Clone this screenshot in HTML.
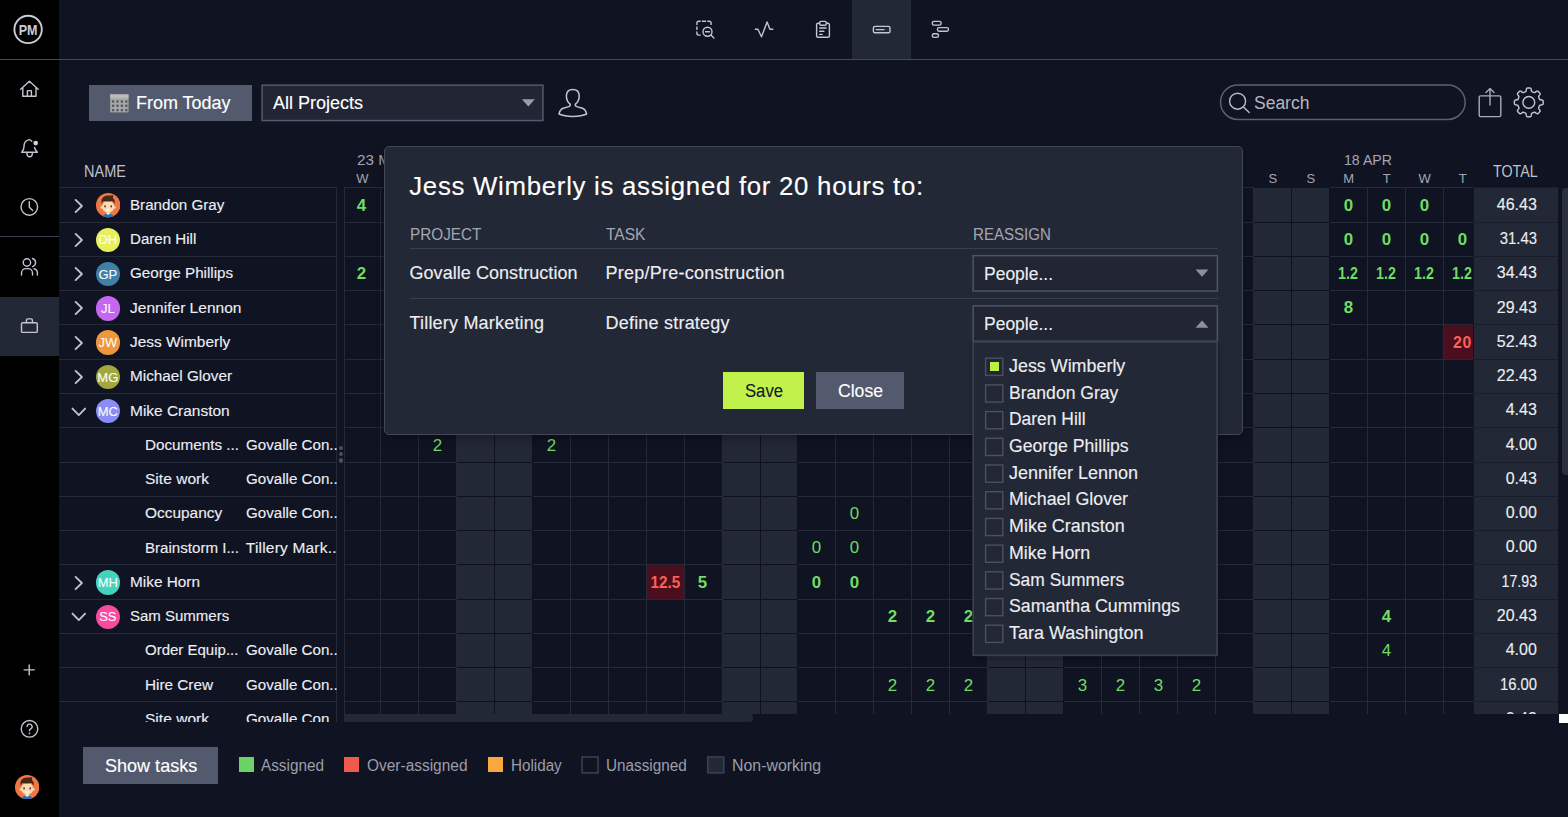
<!DOCTYPE html>
<html lang="en"><head><meta charset="utf-8"><title>Workload</title>
<style>
html,body{margin:0;padding:0}
body{width:1568px;height:817px;overflow:hidden;position:relative;background:#101322;font-family:"Liberation Sans",sans-serif;}
div,svg{position:absolute;box-sizing:border-box}
.t{white-space:nowrap;line-height:1;}
.k{-webkit-text-stroke:.13px currentColor;}
.ic{fill:none;stroke:#c3c6d2;stroke-width:1.4;stroke-linecap:round;stroke-linejoin:round}
.av{border-radius:50%;color:#fff;text-align:center;}
</style></head><body>

<div style="left:0;top:0;width:59px;height:817px;background:#000"></div>
<div style="left:0;top:296.5px;width:59px;height:59px;background:#232836"></div>
<div style="left:0;top:236px;width:59px;height:1.3px;background:#3a3f4e"></div>
<div style="left:852px;top:0;width:59px;height:59px;background:#232836"></div>
<div style="left:0;top:59px;width:1568px;height:1px;background:#444959"></div>
<svg style="left:0;top:0" width="1568" height="140" viewBox="0 0 1568 140">
<circle cx="28.1" cy="29.4" r="13.7" fill="none" stroke="#c9ccd8" stroke-width="1.9"/>
<text x="18.7" y="34.6" font-family="Liberation Sans, sans-serif" font-weight="bold" font-size="14.6" textLength="18.8" lengthAdjust="spacingAndGlyphs" fill="#c9ccd8">PM</text>
<path class="ic" d="M20.6 89.2 L29.4 81.2 L38.2 89.2 M22.8 87.6 V96.2 H36 V87.6 M27.4 96.2 V90.6 H31.4 V96.2"/>
<path class="ic" d="M696.9 24.4v-1.300a1.800 1.800 0 0 1 1.800-1.800h1.500 M702.400 21.300h3.200 M707.800 21.300h1.500a1.800 1.800 0 0 1 1.800 1.800v1.300 M696.900 27v2.400 M696.900 32v1.300a1.800 1.800 0 0 0 1.800 1.800h1.500"/>
<circle class="ic" cx="707.5" cy="31.8" r="4.5"/><path class="ic" d="M705.500 31.800h4 M710.900 35.100L713.900 38"/>
<path class="ic" d="M755.400 29.300H757.900L761.500 36.800L767.100 21.900L769.900 29.300H772.800"/>
<path class="ic" d="M819.400 23.300h-1.400a1.400 1.400 0 0 0-1.400 1.400v11.200a1.400 1.400 0 0 0 1.400 1.400h10a1.400 1.400 0 0 0 1.400-1.400v-11.200a1.400 1.400 0 0 0-1.400-1.400h-1.400"/>
<rect class="ic" x="819.700" y="21.400" width="6.600" height="3.900" rx="1.200"/><path class="ic" d="M819.700 28h6.400 M819.700 31.300h4.200 M819.700 34.400h2.400"/>
<rect class="ic" x="873.4" y="26.4" width="16.6" height="6.4" rx="1.6"/><path class="ic" d="M876.4 29.6h7.6"/>
<rect class="ic" x="932.300" y="21.400" width="8.800" height="3.700" rx="1.700"/><rect class="ic" x="937.400" y="27.600" width="11.100" height="3.700" rx="1.700"/><rect class="ic" x="932.300" y="33.700" width="6.200" height="3.700" rx="1.700"/>
</svg>
<svg style="left:0;top:120px" width="60" height="697" viewBox="0 120 60 697">
<path class="ic" d="M31.800 141.200C30.900 140.200 30 139.600 29.200 139.600C25.800 140.300 24 143 24 146.500C24 149 23.200 150.700 21.700 152.200H37.400C35.900 150.800 34.800 149.400 34.500 147.400 M26.900 152.500C26.900 155 28 156.800 29.600 156.800S32.400 155 32.400 152.500"/>
<circle cx="35.700" cy="143.100" r="2.350" fill="#cfd1e2"/>
<circle class="ic" cx="29.3" cy="206.9" r="8.3"/><path class="ic" d="M29.3 201.6v5.600l3.400 3.200"/>
<circle class="ic" cx="26.900" cy="262.500" r="3.700"/><path class="ic" d="M21.500 275v-2a4.400 4.400 0 0 1 4.400-4.400h2.200a4.400 4.400 0 0 1 4.400 4.400v2"/>
<path class="ic" d="M32.500 258.500a4.200 4.200 0 0 1 0 8.100 M34 268.700a4.300 4.300 0 0 1 3.400 4.300v2"/>
<rect class="ic" x="21.500" y="322.800" width="15.800" height="9.600" rx="1.200"/><path class="ic" d="M26.400 322.600v-2.400a1.300 1.300 0 0 1 1.300-1.300h3.400a1.300 1.300 0 0 1 1.300 1.300v2.400"/>
<path class="ic" d="M24.200 669.900h10 M29.200 664.900v10"/>
<circle class="ic" cx="29.500" cy="728.800" r="8.300"/><path class="ic" d="M27.100 726.600a2.500 2.500 0 1 1 3.600 2.300c-.8.400-1.200 1-1.200 1.900"/><circle cx="29.500" cy="733.300" r=".9" fill="#c3c6d2"/>
</svg>
<svg style="left:14.90px;top:775.10px" width="24.40" height="24.40" viewBox="-12 -12 24 24"><defs><clipPath id="c1058"><circle r="12"/></clipPath></defs><circle r="12" fill="#ee7745"/><g clip-path="url(#c1058)"><path d="M-6 13.500c0-3.600 2.400-5 6-5s6 1.400 6 5z" fill="#2b70b6"/><path d="M-1.700 6.500h3.400v2l-1.700 1.200-1.700-1.200z" fill="#fbe9d2"/><ellipse cx="0" cy="1.500" rx="6" ry="6" fill="#f9dcb4"/><circle cx="-6.200" cy="2.200" r="1.300" fill="#f6d2a6"/><circle cx="6.200" cy="2.200" r="1.300" fill="#f6d2a6"/><path d="M-6.300 -1.200c-1.100-4.800 1-8 6-8.300 2.200-.1 3.700.2 4.900-.6.600 1.100.4 2-.2 2.700 1.800 1.300 2.400 3.400 1.900 6.200-.7-1.500-1.300-2.300-2.300-2.900-3 .800-6.200.700-8.500 0-.9.700-1.400 1.600-1.800 2.900z" fill="#472818"/><ellipse cx="-3.100" cy="1.200" rx=".85" ry="1.050" fill="#5a2f1c"/><ellipse cx="3" cy="1.200" rx=".85" ry="1.050" fill="#5a2f1c"/><path d="M-2.500 4.200c1.400 1.800 3.600 1.800 5 0z" fill="#fff"/></g></svg>
<div style="left:89px;top:84.600px;width:163px;height:36.600px;background:#535a6e"></div>
<svg style="left:110px;top:94px" width="19" height="19" viewBox="110 94 19 19"><rect x="110.200" y="94.400" width="18.300" height="18" fill="#a9a9a4"/><rect x="110.200" y="94.400" width="18.300" height="3.600" fill="#bcbcb6"/><rect x="111.90" y="100.30" width="2.400" height="2.400" fill="#565c6c"/><rect x="116.30" y="100.30" width="2.400" height="2.400" fill="#565c6c"/><rect x="120.70" y="100.30" width="2.400" height="2.400" fill="#565c6c"/><rect x="125.10" y="100.30" width="2.400" height="2.400" fill="#565c6c"/><rect x="111.90" y="104.60" width="2.400" height="2.400" fill="#565c6c"/><rect x="116.30" y="104.60" width="2.400" height="2.400" fill="#565c6c"/><rect x="120.70" y="104.60" width="2.400" height="2.400" fill="#565c6c"/><rect x="125.10" y="104.60" width="2.400" height="2.400" fill="#565c6c"/><rect x="111.90" y="108.90" width="2.400" height="2.400" fill="#565c6c"/><rect x="116.30" y="108.90" width="2.400" height="2.400" fill="#565c6c"/><rect x="120.70" y="108.90" width="2.400" height="2.400" fill="#565c6c"/><rect x="125.10" y="108.90" width="2.400" height="2.400" fill="#565c6c"/></svg>
<div class="t k" style="left:136.00px;top:94.06px;font-size:18.00px;color:#fff;transform:scaleX(0.9978);transform-origin:left center;">From Today</div>
<svg style="left:260px;top:83px" width="285" height="40" viewBox="260 83 285 40"><rect x="262.05" y="85.15" width="280.90" height="35.40" rx="0.00" fill="#222634" stroke="#545a6b" stroke-width="1.50"/></svg>
<div class="t k" style="left:273.00px;top:94.06px;font-size:18.00px;color:#fff;">All Projects</div>
<svg style="left:520px;top:97px" width="18" height="12"><path d="M1.900 2.300h12.900l-6.450 7.100z" fill="#9a9eaa"/></svg>
<svg style="left:556px;top:86px" width="34" height="34" viewBox="556 86 34 34"><path class="ic" d="M572.800 89.400c-4 0-6.400 2.600-6.400 6.600 0 3.400 1.400 6.400 3.800 8.200.4 1.200-.2 2-1.400 2.400l-5.600 1.600c-2.400.7-3.600 2.700-4.200 5.800 3.400 1.600 8 2.400 13.800 2.400s10.400-.8 13.800-2.400c-.6-3.100-1.800-5.100-4.200-5.800l-5.600-1.600c-1.200-.4-1.800-1.200-1.400-2.400 2.400-1.800 3.800-4.800 3.800-8.200 0-4-2.400-6.600-6.400-6.600z" style="stroke-width:1.500"/></svg>
<svg style="left:1218px;top:83px" width="249" height="39" viewBox="1218 83 249 39"><rect x="1220.55" y="84.95" width="244.60" height="34.50" rx="17.25" fill="none" stroke="#5c6172" stroke-width="1.50"/></svg>
<svg style="left:1225px;top:88px" width="30" height="30" viewBox="1225 88 30 30"><circle class="ic" cx="1237.600" cy="101.200" r="8" style="stroke:#b9bbc4"/><path class="ic" d="M1243.400 107l5.800 5.600" style="stroke:#b9bbc4"/></svg>
<div class="t" style="left:1253.70px;top:93.86px;font-size:18.00px;color:#b4b7c0;transform:scaleX(0.9713);transform-origin:left center;">Search</div>
<svg style="left:1474px;top:84px" width="34" height="38" viewBox="1474 84 34 38"><path class="ic" d="M1480.600 95.900h18.800a1.400 1.400 0 0 1 1.400 1.400v17.900a1.400 1.400 0 0 1 -1.400 1.400h-18.800a1.400 1.400 0 0 1 -1.400-1.400v-17.900a1.400 1.400 0 0 1 1.400-1.400z M1490 105v-16 M1486 92.400l4-4 4 4" style="stroke:#a9acb8"/></svg>
<svg style="left:1510px;top:84px" width="38" height="38" viewBox="1510 84 38 38"><path class="ic" d="M1528.8 88.0L1529.2 88.0L1529.6 88.0L1529.9 88.0L1530.3 88.1L1530.7 88.2L1531.0 88.6L1531.2 89.3L1531.4 90.4L1531.5 91.1L1531.7 91.5L1532.0 91.7L1532.3 91.8L1532.5 91.9L1532.8 92.0L1533.1 92.1L1533.3 92.2L1533.6 92.3L1533.9 92.4L1534.1 92.6L1534.4 92.6L1534.9 92.5L1535.5 92.1L1536.3 91.4L1537.0 91.1L1537.5 91.1L1537.9 91.2L1538.2 91.4L1538.5 91.7L1538.7 91.9L1539.0 92.2L1539.3 92.5L1539.5 92.7L1539.8 93.0L1540.0 93.3L1540.1 93.7L1540.1 94.2L1539.8 94.9L1539.1 95.7L1538.7 96.3L1538.6 96.8L1538.6 97.1L1538.8 97.3L1538.9 97.6L1539.0 97.9L1539.1 98.1L1539.2 98.4L1539.3 98.7L1539.4 98.9L1539.5 99.2L1539.7 99.5L1540.1 99.7L1540.8 99.8L1541.9 100.0L1542.6 100.2L1543.0 100.5L1543.1 100.9L1543.2 101.3L1543.2 101.6L1543.2 102.0L1543.2 102.4L1543.2 102.8L1543.2 103.2L1543.2 103.5L1543.1 103.9L1543.0 104.3L1542.6 104.6L1541.9 104.8L1540.8 105.0L1540.1 105.1L1539.7 105.3L1539.5 105.6L1539.4 105.9L1539.3 106.1L1539.2 106.4L1539.1 106.7L1539.0 106.9L1538.9 107.2L1538.8 107.5L1538.6 107.7L1538.6 108.0L1538.7 108.5L1539.1 109.1L1539.8 109.9L1540.1 110.6L1540.1 111.1L1540.0 111.5L1539.8 111.8L1539.5 112.1L1539.3 112.3L1539.0 112.6L1538.7 112.9L1538.5 113.1L1538.2 113.4L1537.9 113.6L1537.5 113.7L1537.0 113.7L1536.3 113.4L1535.5 112.7L1534.9 112.3L1534.4 112.2L1534.1 112.2L1533.9 112.4L1533.6 112.5L1533.3 112.6L1533.1 112.7L1532.8 112.8L1532.5 112.9L1532.3 113.0L1532.0 113.1L1531.7 113.3L1531.5 113.7L1531.4 114.4L1531.2 115.5L1531.0 116.2L1530.7 116.6L1530.3 116.7L1529.9 116.8L1529.6 116.8L1529.2 116.8L1528.8 116.9L1528.4 116.8L1528.0 116.8L1527.7 116.8L1527.3 116.7L1526.9 116.6L1526.6 116.2L1526.4 115.5L1526.2 114.4L1526.1 113.7L1525.9 113.3L1525.6 113.1L1525.3 113.0L1525.1 112.9L1524.8 112.8L1524.5 112.7L1524.3 112.6L1524.0 112.5L1523.7 112.4L1523.5 112.2L1523.2 112.2L1522.7 112.3L1522.1 112.7L1521.3 113.4L1520.6 113.7L1520.1 113.7L1519.7 113.6L1519.4 113.4L1519.1 113.1L1518.9 112.9L1518.6 112.6L1518.3 112.3L1518.1 112.1L1517.8 111.8L1517.6 111.5L1517.5 111.1L1517.5 110.6L1517.8 109.9L1518.5 109.1L1518.9 108.5L1519.0 108.0L1519.0 107.7L1518.8 107.5L1518.7 107.2L1518.6 106.9L1518.5 106.7L1518.4 106.4L1518.3 106.1L1518.2 105.9L1518.1 105.6L1517.9 105.3L1517.5 105.1L1516.8 105.0L1515.7 104.8L1515.0 104.6L1514.6 104.3L1514.5 103.9L1514.4 103.5L1514.4 103.2L1514.4 102.8L1514.3 102.4L1514.4 102.0L1514.4 101.6L1514.4 101.3L1514.5 100.9L1514.6 100.5L1515.0 100.2L1515.7 100.0L1516.8 99.8L1517.5 99.7L1517.9 99.5L1518.1 99.2L1518.2 98.9L1518.3 98.7L1518.4 98.4L1518.5 98.1L1518.6 97.9L1518.7 97.6L1518.8 97.3L1519.0 97.1L1519.0 96.8L1518.9 96.3L1518.5 95.7L1517.8 94.9L1517.5 94.2L1517.5 93.7L1517.6 93.3L1517.8 93.0L1518.1 92.7L1518.3 92.5L1518.6 92.2L1518.9 91.9L1519.1 91.7L1519.4 91.4L1519.7 91.2L1520.1 91.1L1520.6 91.1L1521.3 91.4L1522.1 92.1L1522.7 92.5L1523.2 92.6L1523.5 92.6L1523.7 92.4L1524.0 92.3L1524.3 92.2L1524.5 92.1L1524.8 92.0L1525.1 91.9L1525.3 91.8L1525.6 91.7L1525.9 91.5L1526.1 91.1L1526.2 90.4L1526.4 89.3L1526.6 88.6L1526.9 88.2L1527.3 88.1L1527.7 88.0L1528.0 88.0L1528.4 88.0Z" style="stroke:#c3c6d2;stroke-width:1.400;stroke-linejoin:round"/><circle class="ic" cx="1528.800" cy="102.400" r="5.900" style="stroke-width:1.400"/></svg>
<div class="t" style="left:83.80px;top:163.29px;font-size:16.20px;color:#bfc2cc;transform:scaleX(0.8952);transform-origin:left center;">NAME</div>
<div style="left:59px;top:180px;width:278px;height:542px;overflow:hidden">
<div style="left:0;top:7.40px;width:277px;height:1px;background:#252a39"></div>
<div style="left:0;top:41.67px;width:277px;height:1px;background:#252a39"></div>
<div style="left:0;top:75.94px;width:277px;height:1px;background:#252a39"></div>
<div style="left:0;top:110.21px;width:277px;height:1px;background:#252a39"></div>
<div style="left:0;top:144.48px;width:277px;height:1px;background:#252a39"></div>
<div style="left:0;top:178.75px;width:277px;height:1px;background:#252a39"></div>
<div style="left:0;top:213.02px;width:277px;height:1px;background:#252a39"></div>
<div style="left:0;top:247.29px;width:277px;height:1px;background:#252a39"></div>
<div style="left:0;top:281.56px;width:277px;height:1px;background:#252a39"></div>
<div style="left:0;top:315.83px;width:277px;height:1px;background:#252a39"></div>
<div style="left:0;top:350.10px;width:277px;height:1px;background:#252a39"></div>
<div style="left:0;top:384.37px;width:277px;height:1px;background:#252a39"></div>
<div style="left:0;top:418.64px;width:277px;height:1px;background:#252a39"></div>
<div style="left:0;top:452.91px;width:277px;height:1px;background:#252a39"></div>
<div style="left:0;top:487.18px;width:277px;height:1px;background:#252a39"></div>
<div style="left:0;top:521.45px;width:277px;height:1px;background:#252a39"></div>
<div style="left:0;top:555.72px;width:277px;height:1px;background:#252a39"></div>
<div style="left:277px;top:7.400px;width:1px;height:540px;background:#252a39"></div>
<div class="t k" style="left:71.10px;top:16.88px;font-size:15.50px;color:#eceef2;transform:scaleX(0.9772);transform-origin:left center;">Brandon Gray</div>
<svg style="left:13.80px;top:16.60px" width="12" height="18" viewBox="0 0 12 18"><path class="ic" d="M2.600 2.900l6.300 6.100-6.300 6.100" style="stroke:#c0c3cf;stroke-width:1.850"/></svg>
<div class="t k" style="left:71.10px;top:51.15px;font-size:15.50px;color:#eceef2;transform:scaleX(0.9743);transform-origin:left center;">Daren Hill</div>
<svg style="left:13.80px;top:50.87px" width="12" height="18" viewBox="0 0 12 18"><path class="ic" d="M2.600 2.900l6.300 6.100-6.300 6.100" style="stroke:#c0c3cf;stroke-width:1.850"/></svg>
<div class="av" style="left:36.60px;top:47.67px;width:24.400px;height:24.400px;background:#e6f05a"></div>
<div class="t k" style="left:39.41px;top:53.47px;font-size:13.00px;color:#fff;opacity:.96">DH</div>
<div class="t k" style="left:71.10px;top:85.42px;font-size:15.50px;color:#eceef2;transform:scaleX(0.9818);transform-origin:left center;">George Phillips</div>
<svg style="left:13.80px;top:85.14px" width="12" height="18" viewBox="0 0 12 18"><path class="ic" d="M2.600 2.900l6.300 6.100-6.300 6.100" style="stroke:#c0c3cf;stroke-width:1.850"/></svg>
<div class="av" style="left:36.60px;top:81.94px;width:24.400px;height:24.400px;background:#3f80a8"></div>
<div class="t k" style="left:39.41px;top:87.74px;font-size:13.00px;color:#fff;opacity:.96">GP</div>
<div class="t k" style="left:71.10px;top:119.69px;font-size:15.50px;color:#eceef2;letter-spacing:0.009px;">Jennifer Lennon</div>
<svg style="left:13.80px;top:119.41px" width="12" height="18" viewBox="0 0 12 18"><path class="ic" d="M2.600 2.900l6.300 6.100-6.300 6.100" style="stroke:#c0c3cf;stroke-width:1.850"/></svg>
<div class="av" style="left:36.60px;top:116.21px;width:24.400px;height:24.400px;background:#c566f0"></div>
<div class="t k" style="left:41.93px;top:122.01px;font-size:13.00px;color:#fff;opacity:.96">JL</div>
<div class="t k" style="left:71.10px;top:153.96px;font-size:15.50px;color:#eceef2;transform:scaleX(0.9954);transform-origin:left center;">Jess Wimberly</div>
<svg style="left:13.80px;top:153.68px" width="12" height="18" viewBox="0 0 12 18"><path class="ic" d="M2.600 2.900l6.300 6.100-6.300 6.100" style="stroke:#c0c3cf;stroke-width:1.850"/></svg>
<div class="av" style="left:36.60px;top:150.48px;width:24.400px;height:24.400px;background:#f0963c"></div>
<div class="t k" style="left:39.42px;top:156.28px;font-size:13.00px;color:#fff;opacity:.96">JW</div>
<div class="t k" style="left:71.10px;top:188.23px;font-size:15.50px;color:#eceef2;transform:scaleX(0.9867);transform-origin:left center;">Michael Glover</div>
<svg style="left:13.80px;top:187.95px" width="12" height="18" viewBox="0 0 12 18"><path class="ic" d="M2.600 2.900l6.300 6.100-6.300 6.100" style="stroke:#c0c3cf;stroke-width:1.850"/></svg>
<div class="av" style="left:36.60px;top:184.75px;width:24.400px;height:24.400px;background:#a2a83e"></div>
<div class="t k" style="left:38.33px;top:190.55px;font-size:13.00px;color:#fff;opacity:.96">MG</div>
<div class="t k" style="left:71.10px;top:222.50px;font-size:15.50px;color:#eceef2;transform:scaleX(0.9977);transform-origin:left center;">Mike Cranston</div>
<svg style="left:10.70px;top:225.62px" width="18" height="12" viewBox="0 0 18 12"><path class="ic" d="M2.500 2.600l6.300 6.500 6.300-6.500" style="stroke:#c0c3cf;stroke-width:1.850"/></svg>
<div class="av" style="left:36.60px;top:219.02px;width:24.400px;height:24.400px;background:#8b8df6"></div>
<div class="t k" style="left:38.69px;top:224.82px;font-size:13.00px;color:#fff;opacity:.96">MC</div>
<div class="t k" style="left:86.00px;top:256.77px;font-size:15.50px;color:#eceef2;transform:scaleX(0.9831);transform-origin:left center;">Documents ...</div>
<div class="t k" style="left:186.80px;top:256.77px;font-size:15.50px;color:#eceef2;transform:scaleX(0.9774);transform-origin:left center;">Govalle Con...</div>
<div class="t k" style="left:86.00px;top:291.04px;font-size:15.50px;color:#eceef2;letter-spacing:0.032px;">Site work</div>
<div class="t k" style="left:186.80px;top:291.04px;font-size:15.50px;color:#eceef2;transform:scaleX(0.9774);transform-origin:left center;">Govalle Con...</div>
<div class="t k" style="left:86.00px;top:325.31px;font-size:15.50px;color:#eceef2;transform:scaleX(0.9956);transform-origin:left center;">Occupancy</div>
<div class="t k" style="left:186.80px;top:325.31px;font-size:15.50px;color:#eceef2;transform:scaleX(0.9774);transform-origin:left center;">Govalle Con...</div>
<div class="t k" style="left:86.00px;top:359.58px;font-size:15.50px;color:#eceef2;transform:scaleX(0.9744);transform-origin:left center;">Brainstorm I...</div>
<div class="t k" style="left:186.80px;top:359.58px;font-size:15.50px;color:#eceef2;letter-spacing:0.198px;">Tillery Mark...</div>
<div class="t k" style="left:71.10px;top:393.85px;font-size:15.50px;color:#eceef2;transform:scaleX(0.9911);transform-origin:left center;">Mike Horn</div>
<svg style="left:13.80px;top:393.57px" width="12" height="18" viewBox="0 0 12 18"><path class="ic" d="M2.600 2.900l6.300 6.100-6.300 6.100" style="stroke:#c0c3cf;stroke-width:1.850"/></svg>
<div class="av" style="left:36.60px;top:390.37px;width:24.400px;height:24.400px;background:#46d3bd"></div>
<div class="t k" style="left:38.69px;top:396.17px;font-size:13.00px;color:#fff;opacity:.96">MH</div>
<div class="t k" style="left:71.10px;top:428.12px;font-size:15.50px;color:#eceef2;transform:scaleX(0.9679);transform-origin:left center;">Sam Summers</div>
<svg style="left:10.70px;top:431.24px" width="18" height="12" viewBox="0 0 18 12"><path class="ic" d="M2.500 2.600l6.300 6.500 6.300-6.500" style="stroke:#c0c3cf;stroke-width:1.850"/></svg>
<div class="av" style="left:36.60px;top:424.64px;width:24.400px;height:24.400px;background:#f84b9f"></div>
<div class="t k" style="left:40.13px;top:430.44px;font-size:13.00px;color:#fff;opacity:.96">SS</div>
<div class="t k" style="left:86.00px;top:462.39px;font-size:15.50px;color:#eceef2;transform:scaleX(0.9680);transform-origin:left center;">Order Equip...</div>
<div class="t k" style="left:186.80px;top:462.39px;font-size:15.50px;color:#eceef2;transform:scaleX(0.9774);transform-origin:left center;">Govalle Con...</div>
<div class="t k" style="left:86.00px;top:496.66px;font-size:15.50px;color:#eceef2;transform:scaleX(0.9870);transform-origin:left center;">Hire Crew</div>
<div class="t k" style="left:186.80px;top:496.66px;font-size:15.50px;color:#eceef2;transform:scaleX(0.9774);transform-origin:left center;">Govalle Con...</div>
<div class="t k" style="left:86.00px;top:530.93px;font-size:15.50px;color:#eceef2;letter-spacing:0.032px;">Site work</div>
<div class="t k" style="left:186.80px;top:530.93px;font-size:15.50px;color:#eceef2;transform:scaleX(0.9774);transform-origin:left center;">Govalle Con...</div>
</div>
<svg style="left:95.60px;top:193.40px" width="24.40" height="24.40" viewBox="-12 -12 24 24"><defs><clipPath id="c1283"><circle r="12"/></clipPath></defs><circle r="12" fill="#ee7745"/><g clip-path="url(#c1283)"><path d="M-6 13.500c0-3.600 2.400-5 6-5s6 1.400 6 5z" fill="#2b70b6"/><path d="M-1.700 6.500h3.400v2l-1.700 1.200-1.700-1.200z" fill="#fbe9d2"/><ellipse cx="0" cy="1.500" rx="6" ry="6" fill="#f9dcb4"/><circle cx="-6.200" cy="2.200" r="1.300" fill="#f6d2a6"/><circle cx="6.200" cy="2.200" r="1.300" fill="#f6d2a6"/><path d="M-6.300 -1.200c-1.100-4.800 1-8 6-8.300 2.200-.1 3.700.2 4.900-.6.600 1.100.4 2-.2 2.700 1.800 1.300 2.400 3.400 1.900 6.200-.7-1.500-1.300-2.300-2.300-2.900-3 .800-6.200.700-8.500 0-.9.700-1.400 1.600-1.800 2.900z" fill="#472818"/><ellipse cx="-3.100" cy="1.200" rx=".85" ry="1.050" fill="#5a2f1c"/><ellipse cx="3" cy="1.200" rx=".85" ry="1.050" fill="#5a2f1c"/><path d="M-2.500 4.200c1.400 1.800 3.600 1.800 5 0z" fill="#fff"/></g></svg>
<div style="left:338.600px;top:446.10px;width:4.200px;height:4.200px;border-radius:50%;background:#4a4f5e"></div>
<div style="left:338.600px;top:452.30px;width:4.200px;height:4.200px;border-radius:50%;background:#4a4f5e"></div>
<div style="left:338.600px;top:458.40px;width:4.200px;height:4.200px;border-radius:50%;background:#4a4f5e"></div>
<div style="left:344.00px;top:187px;width:1129.00px;height:526.80px;overflow:hidden;background:#101322">
<div style="left:112px;top:0;width:38px;height:600px;background:#232836"></div>
<div style="left:150px;top:0;width:38px;height:600px;background:#232836"></div>
<div style="left:378px;top:0;width:38px;height:600px;background:#232836"></div>
<div style="left:416px;top:0;width:37px;height:600px;background:#232836"></div>
<div style="left:643px;top:0;width:38px;height:600px;background:#232836"></div>
<div style="left:681px;top:0;width:38px;height:600px;background:#232836"></div>
<div style="left:909px;top:0;width:38px;height:600px;background:#232836"></div>
<div style="left:947px;top:0;width:38px;height:600px;background:#232836"></div>
<div style="left:1100px;top:138px;width:37px;height:34px;background:#4b0e1f"></div>
<div style="left:303px;top:378px;width:37px;height:34px;background:#4b0e1f"></div>
<div style="left:0;top:0px;width:1200px;height:1px;background:#252a39"></div>
<div style="left:0;top:35px;width:1200px;height:1px;background:#252a39"></div>
<div style="left:0;top:69px;width:1200px;height:1px;background:#252a39"></div>
<div style="left:0;top:103px;width:1200px;height:1px;background:#252a39"></div>
<div style="left:0;top:137px;width:1200px;height:1px;background:#252a39"></div>
<div style="left:0;top:172px;width:1200px;height:1px;background:#252a39"></div>
<div style="left:0;top:206px;width:1200px;height:1px;background:#252a39"></div>
<div style="left:0;top:240px;width:1200px;height:1px;background:#252a39"></div>
<div style="left:0;top:275px;width:1200px;height:1px;background:#252a39"></div>
<div style="left:0;top:309px;width:1200px;height:1px;background:#252a39"></div>
<div style="left:0;top:343px;width:1200px;height:1px;background:#252a39"></div>
<div style="left:0;top:377px;width:1200px;height:1px;background:#252a39"></div>
<div style="left:0;top:412px;width:1200px;height:1px;background:#252a39"></div>
<div style="left:0;top:446px;width:1200px;height:1px;background:#252a39"></div>
<div style="left:0;top:480px;width:1200px;height:1px;background:#252a39"></div>
<div style="left:0;top:514px;width:1200px;height:1px;background:#252a39"></div>
<div style="left:0;top:549px;width:1200px;height:1px;background:#252a39"></div>
<div style="left:0px;top:0;width:1px;height:600px;background:#252a39"></div>
<div style="left:36px;top:0;width:1px;height:600px;background:#252a39"></div>
<div style="left:74px;top:0;width:1px;height:600px;background:#252a39"></div>
<div style="left:112px;top:0;width:1px;height:600px;background:#252a39"></div>
<div style="left:150px;top:0;width:1px;height:600px;background:#0f121d"></div>
<div style="left:188px;top:0;width:1px;height:600px;background:#0f121d"></div>
<div style="left:226px;top:0;width:1px;height:600px;background:#252a39"></div>
<div style="left:264px;top:0;width:1px;height:600px;background:#252a39"></div>
<div style="left:302px;top:0;width:1px;height:600px;background:#252a39"></div>
<div style="left:340px;top:0;width:1px;height:600px;background:#252a39"></div>
<div style="left:378px;top:0;width:1px;height:600px;background:#252a39"></div>
<div style="left:416px;top:0;width:1px;height:600px;background:#0f121d"></div>
<div style="left:453px;top:0;width:1px;height:600px;background:#0f121d"></div>
<div style="left:491px;top:0;width:1px;height:600px;background:#252a39"></div>
<div style="left:529px;top:0;width:1px;height:600px;background:#252a39"></div>
<div style="left:567px;top:0;width:1px;height:600px;background:#252a39"></div>
<div style="left:605px;top:0;width:1px;height:600px;background:#252a39"></div>
<div style="left:643px;top:0;width:1px;height:600px;background:#252a39"></div>
<div style="left:681px;top:0;width:1px;height:600px;background:#0f121d"></div>
<div style="left:719px;top:0;width:1px;height:600px;background:#0f121d"></div>
<div style="left:757px;top:0;width:1px;height:600px;background:#252a39"></div>
<div style="left:795px;top:0;width:1px;height:600px;background:#252a39"></div>
<div style="left:833px;top:0;width:1px;height:600px;background:#252a39"></div>
<div style="left:871px;top:0;width:1px;height:600px;background:#252a39"></div>
<div style="left:909px;top:0;width:1px;height:600px;background:#252a39"></div>
<div style="left:947px;top:0;width:1px;height:600px;background:#0f121d"></div>
<div style="left:985px;top:0;width:1px;height:600px;background:#0f121d"></div>
<div style="left:1023px;top:0;width:1px;height:600px;background:#252a39"></div>
<div style="left:1061px;top:0;width:1px;height:600px;background:#252a39"></div>
<div style="left:1099px;top:0;width:1px;height:600px;background:#252a39"></div>
<div style="left:1137px;top:0;width:1px;height:600px;background:#252a39"></div>
<div style="left:113px;top:0px;width:76px;height:1px;background:#0f121d"></div>
<div style="left:113px;top:35px;width:76px;height:1px;background:#0f121d"></div>
<div style="left:113px;top:69px;width:76px;height:1px;background:#0f121d"></div>
<div style="left:113px;top:103px;width:76px;height:1px;background:#0f121d"></div>
<div style="left:113px;top:137px;width:76px;height:1px;background:#0f121d"></div>
<div style="left:113px;top:172px;width:76px;height:1px;background:#0f121d"></div>
<div style="left:113px;top:206px;width:76px;height:1px;background:#0f121d"></div>
<div style="left:113px;top:240px;width:76px;height:1px;background:#0f121d"></div>
<div style="left:113px;top:275px;width:76px;height:1px;background:#0f121d"></div>
<div style="left:113px;top:309px;width:76px;height:1px;background:#0f121d"></div>
<div style="left:113px;top:343px;width:76px;height:1px;background:#0f121d"></div>
<div style="left:113px;top:377px;width:76px;height:1px;background:#0f121d"></div>
<div style="left:113px;top:412px;width:76px;height:1px;background:#0f121d"></div>
<div style="left:113px;top:446px;width:76px;height:1px;background:#0f121d"></div>
<div style="left:113px;top:480px;width:76px;height:1px;background:#0f121d"></div>
<div style="left:113px;top:514px;width:76px;height:1px;background:#0f121d"></div>
<div style="left:113px;top:549px;width:76px;height:1px;background:#0f121d"></div>
<div style="left:379px;top:0px;width:75px;height:1px;background:#0f121d"></div>
<div style="left:379px;top:35px;width:75px;height:1px;background:#0f121d"></div>
<div style="left:379px;top:69px;width:75px;height:1px;background:#0f121d"></div>
<div style="left:379px;top:103px;width:75px;height:1px;background:#0f121d"></div>
<div style="left:379px;top:137px;width:75px;height:1px;background:#0f121d"></div>
<div style="left:379px;top:172px;width:75px;height:1px;background:#0f121d"></div>
<div style="left:379px;top:206px;width:75px;height:1px;background:#0f121d"></div>
<div style="left:379px;top:240px;width:75px;height:1px;background:#0f121d"></div>
<div style="left:379px;top:275px;width:75px;height:1px;background:#0f121d"></div>
<div style="left:379px;top:309px;width:75px;height:1px;background:#0f121d"></div>
<div style="left:379px;top:343px;width:75px;height:1px;background:#0f121d"></div>
<div style="left:379px;top:377px;width:75px;height:1px;background:#0f121d"></div>
<div style="left:379px;top:412px;width:75px;height:1px;background:#0f121d"></div>
<div style="left:379px;top:446px;width:75px;height:1px;background:#0f121d"></div>
<div style="left:379px;top:480px;width:75px;height:1px;background:#0f121d"></div>
<div style="left:379px;top:514px;width:75px;height:1px;background:#0f121d"></div>
<div style="left:379px;top:549px;width:75px;height:1px;background:#0f121d"></div>
<div style="left:644px;top:0px;width:76px;height:1px;background:#0f121d"></div>
<div style="left:644px;top:35px;width:76px;height:1px;background:#0f121d"></div>
<div style="left:644px;top:69px;width:76px;height:1px;background:#0f121d"></div>
<div style="left:644px;top:103px;width:76px;height:1px;background:#0f121d"></div>
<div style="left:644px;top:137px;width:76px;height:1px;background:#0f121d"></div>
<div style="left:644px;top:172px;width:76px;height:1px;background:#0f121d"></div>
<div style="left:644px;top:206px;width:76px;height:1px;background:#0f121d"></div>
<div style="left:644px;top:240px;width:76px;height:1px;background:#0f121d"></div>
<div style="left:644px;top:275px;width:76px;height:1px;background:#0f121d"></div>
<div style="left:644px;top:309px;width:76px;height:1px;background:#0f121d"></div>
<div style="left:644px;top:343px;width:76px;height:1px;background:#0f121d"></div>
<div style="left:644px;top:377px;width:76px;height:1px;background:#0f121d"></div>
<div style="left:644px;top:412px;width:76px;height:1px;background:#0f121d"></div>
<div style="left:644px;top:446px;width:76px;height:1px;background:#0f121d"></div>
<div style="left:644px;top:480px;width:76px;height:1px;background:#0f121d"></div>
<div style="left:644px;top:514px;width:76px;height:1px;background:#0f121d"></div>
<div style="left:644px;top:549px;width:76px;height:1px;background:#0f121d"></div>
<div style="left:910px;top:0px;width:76px;height:1px;background:#0f121d"></div>
<div style="left:910px;top:35px;width:76px;height:1px;background:#0f121d"></div>
<div style="left:910px;top:69px;width:76px;height:1px;background:#0f121d"></div>
<div style="left:910px;top:103px;width:76px;height:1px;background:#0f121d"></div>
<div style="left:910px;top:137px;width:76px;height:1px;background:#0f121d"></div>
<div style="left:910px;top:172px;width:76px;height:1px;background:#0f121d"></div>
<div style="left:910px;top:206px;width:76px;height:1px;background:#0f121d"></div>
<div style="left:910px;top:240px;width:76px;height:1px;background:#0f121d"></div>
<div style="left:910px;top:275px;width:76px;height:1px;background:#0f121d"></div>
<div style="left:910px;top:309px;width:76px;height:1px;background:#0f121d"></div>
<div style="left:910px;top:343px;width:76px;height:1px;background:#0f121d"></div>
<div style="left:910px;top:377px;width:76px;height:1px;background:#0f121d"></div>
<div style="left:910px;top:412px;width:76px;height:1px;background:#0f121d"></div>
<div style="left:910px;top:446px;width:76px;height:1px;background:#0f121d"></div>
<div style="left:910px;top:480px;width:76px;height:1px;background:#0f121d"></div>
<div style="left:910px;top:514px;width:76px;height:1px;background:#0f121d"></div>
<div style="left:910px;top:549px;width:76px;height:1px;background:#0f121d"></div>
<div class="t" style="left:13.11px;top:10.53px;font-size:15.80px;color:#6fdc62;font-weight:bold;transform:scaleX(1.07);">4</div>
<div class="t" style="left:999.79px;top:10.53px;font-size:15.80px;color:#6fdc62;font-weight:bold;transform:scaleX(1.07);">0</div>
<div class="t" style="left:1037.75px;top:10.53px;font-size:15.80px;color:#6fdc62;font-weight:bold;transform:scaleX(1.07);">0</div>
<div class="t" style="left:1075.71px;top:10.53px;font-size:15.80px;color:#6fdc62;font-weight:bold;transform:scaleX(1.07);">0</div>
<div class="t" style="left:999.79px;top:44.80px;font-size:15.80px;color:#6fdc62;font-weight:bold;transform:scaleX(1.07);">0</div>
<div class="t" style="left:1037.75px;top:44.80px;font-size:15.80px;color:#6fdc62;font-weight:bold;transform:scaleX(1.07);">0</div>
<div class="t" style="left:1075.71px;top:44.80px;font-size:15.80px;color:#6fdc62;font-weight:bold;transform:scaleX(1.07);">0</div>
<div class="t" style="left:1113.67px;top:44.80px;font-size:15.80px;color:#6fdc62;font-weight:bold;transform:scaleX(1.07);">0</div>
<div class="t" style="left:13.11px;top:79.07px;font-size:15.80px;color:#6fdc62;font-weight:bold;transform:scaleX(1.07);">2</div>
<div class="t" style="left:993.20px;top:79.07px;font-size:15.80px;color:#6fdc62;transform:scaleX(0.9015);transform-origin:center center;font-weight:bold;">1.2</div>
<div class="t" style="left:1031.16px;top:79.07px;font-size:15.80px;color:#6fdc62;transform:scaleX(0.9015);transform-origin:center center;font-weight:bold;">1.2</div>
<div class="t" style="left:1069.12px;top:79.07px;font-size:15.80px;color:#6fdc62;transform:scaleX(0.9015);transform-origin:center center;font-weight:bold;">1.2</div>
<div class="t" style="left:1107.08px;top:79.07px;font-size:15.80px;color:#6fdc62;transform:scaleX(0.9015);transform-origin:center center;font-weight:bold;">1.2</div>
<div class="t" style="left:999.79px;top:113.34px;font-size:15.80px;color:#6fdc62;font-weight:bold;transform:scaleX(1.07);">8</div>
<div class="t" style="left:1108.91px;top:147.61px;font-size:15.80px;color:#fd6054;letter-spacing:0.725px;font-weight:bold;">20</div>
<div class="t" style="left:88.75px;top:250.62px;font-size:15.80px;color:#6fdc62;transform:scaleX(1.07);">2</div>
<div class="t" style="left:202.63px;top:250.62px;font-size:15.80px;color:#6fdc62;transform:scaleX(1.07);">2</div>
<div class="t" style="left:506.31px;top:319.16px;font-size:15.80px;color:#6fdc62;transform:scaleX(1.07);">0</div>
<div class="t" style="left:468.35px;top:353.43px;font-size:15.80px;color:#6fdc62;transform:scaleX(1.07);">0</div>
<div class="t" style="left:506.31px;top:353.43px;font-size:15.80px;color:#6fdc62;transform:scaleX(1.07);">0</div>
<div class="t" style="left:305.52px;top:387.50px;font-size:15.80px;color:#fd6054;transform:scaleX(0.9658);transform-origin:center center;font-weight:bold;">12.5</div>
<div class="t" style="left:354.47px;top:387.50px;font-size:15.80px;color:#6fdc62;font-weight:bold;transform:scaleX(1.07);">5</div>
<div class="t" style="left:468.35px;top:387.50px;font-size:15.80px;color:#6fdc62;font-weight:bold;transform:scaleX(1.07);">0</div>
<div class="t" style="left:506.31px;top:387.50px;font-size:15.80px;color:#6fdc62;font-weight:bold;transform:scaleX(1.07);">0</div>
<div class="t" style="left:544.27px;top:421.77px;font-size:15.80px;color:#6fdc62;font-weight:bold;transform:scaleX(1.07);">2</div>
<div class="t" style="left:582.23px;top:421.77px;font-size:15.80px;color:#6fdc62;font-weight:bold;transform:scaleX(1.07);">2</div>
<div class="t" style="left:620.19px;top:421.77px;font-size:15.80px;color:#6fdc62;font-weight:bold;transform:scaleX(1.07);">2</div>
<div class="t" style="left:1037.75px;top:421.77px;font-size:15.80px;color:#6fdc62;font-weight:bold;transform:scaleX(1.07);">4</div>
<div class="t" style="left:1037.75px;top:456.24px;font-size:15.80px;color:#6fdc62;transform:scaleX(1.07);">4</div>
<div class="t" style="left:544.27px;top:490.51px;font-size:15.80px;color:#6fdc62;transform:scaleX(1.07);">2</div>
<div class="t" style="left:582.23px;top:490.51px;font-size:15.80px;color:#6fdc62;transform:scaleX(1.07);">2</div>
<div class="t" style="left:620.19px;top:490.51px;font-size:15.80px;color:#6fdc62;transform:scaleX(1.07);">2</div>
<div class="t" style="left:734.07px;top:490.51px;font-size:15.80px;color:#6fdc62;transform:scaleX(1.07);">3</div>
<div class="t" style="left:772.03px;top:490.51px;font-size:15.80px;color:#6fdc62;transform:scaleX(1.07);">2</div>
<div class="t" style="left:809.99px;top:490.51px;font-size:15.80px;color:#6fdc62;transform:scaleX(1.07);">3</div>
<div class="t" style="left:847.95px;top:490.51px;font-size:15.80px;color:#6fdc62;transform:scaleX(1.07);">2</div>
</div>
<div style="left:344.00px;top:713.800px;width:408.50px;height:8.600px;background:#232836;border-radius:0 4.300px 4.300px 0"></div>
<div class="t" style="left:356.75px;top:152.48px;font-size:15.50px;color:#a3a7b3;transform:scaleX(0.9823);transform-origin:left center;">23 MAR</div>
<div class="t" style="left:1343.50px;top:152.28px;font-size:15.50px;color:#a3a7b3;transform:scaleX(0.9132);transform-origin:left center;">18 APR</div>
<div class="t" style="left:356.37px;top:172.10px;font-size:13.00px;color:#a3a7b3;">W</div>
<div class="t" style="left:395.81px;top:172.10px;font-size:13.00px;color:#a3a7b3;">T</div>
<div class="t" style="left:433.77px;top:172.10px;font-size:13.00px;color:#a3a7b3;">F</div>
<div class="t" style="left:471.36px;top:172.10px;font-size:13.00px;color:#a3a7b3;">S</div>
<div class="t" style="left:509.32px;top:172.10px;font-size:13.00px;color:#a3a7b3;">S</div>
<div class="t" style="left:546.21px;top:172.10px;font-size:13.00px;color:#a3a7b3;">M</div>
<div class="t" style="left:585.61px;top:172.10px;font-size:13.00px;color:#a3a7b3;">T</div>
<div class="t" style="left:621.41px;top:172.10px;font-size:13.00px;color:#a3a7b3;">W</div>
<div class="t" style="left:661.53px;top:172.10px;font-size:13.00px;color:#a3a7b3;">T</div>
<div class="t" style="left:699.49px;top:172.10px;font-size:13.00px;color:#a3a7b3;">F</div>
<div class="t" style="left:737.08px;top:172.10px;font-size:13.00px;color:#a3a7b3;">S</div>
<div class="t" style="left:775.04px;top:172.10px;font-size:13.00px;color:#a3a7b3;">S</div>
<div class="t" style="left:811.93px;top:172.10px;font-size:13.00px;color:#a3a7b3;">M</div>
<div class="t" style="left:851.33px;top:172.10px;font-size:13.00px;color:#a3a7b3;">T</div>
<div class="t" style="left:887.13px;top:172.10px;font-size:13.00px;color:#a3a7b3;">W</div>
<div class="t" style="left:927.25px;top:172.10px;font-size:13.00px;color:#a3a7b3;">T</div>
<div class="t" style="left:965.21px;top:172.10px;font-size:13.00px;color:#a3a7b3;">F</div>
<div class="t" style="left:1002.80px;top:172.10px;font-size:13.00px;color:#a3a7b3;">S</div>
<div class="t" style="left:1040.76px;top:172.10px;font-size:13.00px;color:#a3a7b3;">S</div>
<div class="t" style="left:1077.65px;top:172.10px;font-size:13.00px;color:#a3a7b3;">M</div>
<div class="t" style="left:1117.05px;top:172.10px;font-size:13.00px;color:#a3a7b3;">T</div>
<div class="t" style="left:1152.85px;top:172.10px;font-size:13.00px;color:#a3a7b3;">W</div>
<div class="t" style="left:1192.97px;top:172.10px;font-size:13.00px;color:#a3a7b3;">T</div>
<div class="t" style="left:1230.93px;top:172.10px;font-size:13.00px;color:#a3a7b3;">F</div>
<div class="t" style="left:1268.52px;top:172.10px;font-size:13.00px;color:#a3a7b3;">S</div>
<div class="t" style="left:1306.48px;top:172.10px;font-size:13.00px;color:#a3a7b3;">S</div>
<div class="t" style="left:1343.37px;top:172.10px;font-size:13.00px;color:#a3a7b3;">M</div>
<div class="t" style="left:1382.77px;top:172.10px;font-size:13.00px;color:#a3a7b3;">T</div>
<div class="t" style="left:1418.57px;top:172.10px;font-size:13.00px;color:#a3a7b3;">W</div>
<div class="t" style="left:1458.69px;top:172.10px;font-size:13.00px;color:#a3a7b3;">T</div>
<div class="t" style="left:544.74px;top:152.28px;font-size:15.50px;color:#a3a7b3;">28 MAR</div>
<div class="t" style="left:810.46px;top:152.28px;font-size:15.50px;color:#a3a7b3;">4 APR</div>
<div class="t" style="left:1076.18px;top:152.28px;font-size:15.50px;color:#a3a7b3;">11 APR</div>
<div class="t" style="left:1493.00px;top:163.39px;font-size:16.20px;color:#bfc2cc;transform:scaleX(0.8834);transform-origin:left center;">TOTAL</div>
<div style="left:1474.00px;top:187px;width:83.80px;height:526.80px;overflow:hidden;background:#232836">
<div style="left:0;top:0.40px;width:100px;height:1px;background:#191d29"></div>
<div class="t k" style="left:22.76px;top:9.76px;font-size:16.00px;color:#eceef2;">46.43</div>
<div style="left:0;top:34.67px;width:100px;height:1px;background:#191d29"></div>
<div class="t k" style="left:22.76px;top:44.03px;font-size:16.00px;color:#eceef2;transform:scaleX(0.9291);transform-origin:right center;">31.43</div>
<div style="left:0;top:68.94px;width:100px;height:1px;background:#191d29"></div>
<div class="t k" style="left:22.76px;top:78.30px;font-size:16.00px;color:#eceef2;">34.43</div>
<div style="left:0;top:103.21px;width:100px;height:1px;background:#191d29"></div>
<div class="t k" style="left:22.76px;top:112.57px;font-size:16.00px;color:#eceef2;">29.43</div>
<div style="left:0;top:137.48px;width:100px;height:1px;background:#191d29"></div>
<div class="t k" style="left:22.76px;top:146.84px;font-size:16.00px;color:#eceef2;">52.43</div>
<div style="left:0;top:171.75px;width:100px;height:1px;background:#191d29"></div>
<div class="t k" style="left:22.76px;top:181.11px;font-size:16.00px;color:#eceef2;">22.43</div>
<div style="left:0;top:206.02px;width:100px;height:1px;background:#191d29"></div>
<div class="t k" style="left:31.66px;top:215.38px;font-size:16.00px;color:#eceef2;">4.43</div>
<div style="left:0;top:240.29px;width:100px;height:1px;background:#191d29"></div>
<div class="t k" style="left:31.66px;top:249.65px;font-size:16.00px;color:#eceef2;">4.00</div>
<div style="left:0;top:274.56px;width:100px;height:1px;background:#191d29"></div>
<div class="t k" style="left:31.66px;top:283.92px;font-size:16.00px;color:#eceef2;">0.43</div>
<div style="left:0;top:308.83px;width:100px;height:1px;background:#191d29"></div>
<div class="t k" style="left:31.66px;top:318.19px;font-size:16.00px;color:#eceef2;">0.00</div>
<div style="left:0;top:343.10px;width:100px;height:1px;background:#191d29"></div>
<div class="t k" style="left:31.66px;top:352.46px;font-size:16.00px;color:#eceef2;">0.00</div>
<div style="left:0;top:377.37px;width:100px;height:1px;background:#191d29"></div>
<div class="t k" style="left:22.76px;top:386.73px;font-size:16.00px;color:#eceef2;transform:scaleX(0.8866);transform-origin:right center;">17.93</div>
<div style="left:0;top:411.64px;width:100px;height:1px;background:#191d29"></div>
<div class="t k" style="left:22.76px;top:421.00px;font-size:16.00px;color:#eceef2;">20.43</div>
<div style="left:0;top:445.91px;width:100px;height:1px;background:#191d29"></div>
<div class="t k" style="left:31.66px;top:455.27px;font-size:16.00px;color:#eceef2;">4.00</div>
<div style="left:0;top:480.18px;width:100px;height:1px;background:#191d29"></div>
<div class="t k" style="left:22.76px;top:489.54px;font-size:16.00px;color:#eceef2;transform:scaleX(0.9241);transform-origin:right center;">16.00</div>
<div style="left:0;top:514.45px;width:100px;height:1px;background:#191d29"></div>
<div class="t k" style="left:31.66px;top:523.81px;font-size:16.00px;color:#eceef2;">0.43</div>
</div>
<div style="left:1561.500px;top:188px;width:8px;height:287px;background:#2a2f3d;border-radius:4px 0 0 4px"></div>
<div style="left:1559.300px;top:713.800px;width:9px;height:9.200px;background:#fff"></div>
<div style="left:384px;top:146px;width:859px;height:289px;background:#232836;border:1.2px solid #434858;border-radius:5px;box-shadow:0 3px 10px rgba(0,0,0,.35)"></div>
<div class="t k" style="left:409.25px;top:173.56px;font-size:25.80px;color:#fff;letter-spacing:0.715px;">Jess Wimberly is assigned for 20 hours to:</div>
<div class="t" style="left:409.50px;top:225.90px;font-size:16.30px;color:#a3a7b3;transform:scaleX(0.9399);transform-origin:left center;">PROJECT</div>
<div class="t" style="left:605.50px;top:225.90px;font-size:16.30px;color:#a3a7b3;transform:scaleX(0.9549);transform-origin:left center;">TASK</div>
<div class="t" style="left:973.00px;top:225.80px;font-size:16.30px;color:#a3a7b3;transform:scaleX(0.9259);transform-origin:left center;">REASSIGN</div>
<div style="left:409.500px;top:248.300px;width:808.200px;height:1.200px;background:#3a3f4e"></div>
<div style="left:409.500px;top:298px;width:808.200px;height:1.200px;background:#3a3f4e"></div>
<div class="t k" style="left:409.50px;top:264.26px;font-size:18.00px;color:#eceef2;letter-spacing:0.048px;">Govalle Construction</div>
<div class="t k" style="left:605.50px;top:264.26px;font-size:18.00px;color:#eceef2;letter-spacing:0.246px;">Prep/Pre-construction</div>
<div class="t k" style="left:409.50px;top:314.36px;font-size:18.00px;color:#eceef2;letter-spacing:0.196px;">Tillery Marketing</div>
<div class="t k" style="left:605.50px;top:314.36px;font-size:18.00px;color:#eceef2;letter-spacing:0.210px;">Define strategy</div>
<svg style="left:971px;top:253px" width="249" height="40" viewBox="971 253 249 40"><rect x="973.15" y="255.65" width="244.20" height="35.40" rx="0.00" fill="#222633" stroke="#4f5566" stroke-width="1.50"/></svg>
<div class="t k" style="left:984.00px;top:264.76px;font-size:18.00px;color:#eceef2;transform:scaleX(0.9711);transform-origin:left center;">People...</div>
<svg style="left:1193px;top:267.30px" width="18" height="12"><path d="M2.500 2.500h13l-6.500 7.200z" fill="#8d919e"/></svg>
<svg style="left:971px;top:304px" width="249" height="39" viewBox="971 304 249 39"><rect x="973.15" y="305.85" width="244.20" height="35.40" rx="0.00" fill="#222633" stroke="#4f5566" stroke-width="1.50"/></svg>
<div class="t k" style="left:984.00px;top:314.96px;font-size:18.00px;color:#eceef2;transform:scaleX(0.9711);transform-origin:left center;">People...</div>
<svg style="left:1193px;top:317.50px" width="18" height="12"><path d="M2.500 9.700h13l-6.500-7.200z" fill="#8d919e"/></svg>
<div style="left:723px;top:372.200px;width:81px;height:37px;background:#c0f24b"></div>
<div class="t k" style="left:744.50px;top:381.66px;font-size:18.00px;color:#141826;transform:scaleX(0.9262);transform-origin:left center;">Save</div>
<div style="left:816px;top:372.200px;width:88px;height:37px;background:#535a6e"></div>
<div class="t k" style="left:837.50px;top:381.66px;font-size:18.00px;color:#fff;transform:scaleX(0.9778);transform-origin:left center;">Close</div>
<div style="left:973px;top:342px;width:244.500px;height:313.500px;background:#232836;box-shadow:0 2px 6px rgba(0,0,0,.25)"></div>
<svg style="left:971px;top:340px" width="248" height="318" viewBox="971 340 248 318"><rect x="973.15" y="342.05" width="243.90" height="313.30" rx="0.00" fill="none" stroke="#3a3f4f" stroke-width="1.70"/></svg>
<svg style="left:983px;top:356px" width="22" height="22" viewBox="983 356 22 22"><rect x="985.60" y="358.20" width="17.20" height="17.20" rx="0.00" fill="#232734" stroke="#4b5161" stroke-width="1.40"/></svg>
<div style="left:989.700px;top:362.30px;width:9.200px;height:9.200px;background:#b8f044"></div>
<div class="t k" style="left:1009.00px;top:356.96px;font-size:18.00px;color:#eceef2;transform:scaleX(0.9939);transform-origin:left center;">Jess Wimberly</div>
<svg style="left:983px;top:383px" width="22" height="21" viewBox="983 383 22 21"><rect x="985.60" y="384.90" width="17.20" height="17.20" rx="0.00" fill="#232734" stroke="#4b5161" stroke-width="1.40"/></svg>
<div class="t k" style="left:1009.00px;top:383.66px;font-size:18.00px;color:#eceef2;transform:scaleX(0.9762);transform-origin:left center;">Brandon Gray</div>
<svg style="left:983px;top:409px" width="22" height="22" viewBox="983 409 22 22"><rect x="985.60" y="411.60" width="17.20" height="17.20" rx="0.00" fill="#232734" stroke="#4b5161" stroke-width="1.40"/></svg>
<div class="t k" style="left:1009.00px;top:410.36px;font-size:18.00px;color:#eceef2;transform:scaleX(0.9693);transform-origin:left center;">Daren Hill</div>
<svg style="left:983px;top:436px" width="22" height="22" viewBox="983 436 22 22"><rect x="985.60" y="438.30" width="17.20" height="17.20" rx="0.00" fill="#232734" stroke="#4b5161" stroke-width="1.40"/></svg>
<div class="t k" style="left:1009.00px;top:437.06px;font-size:18.00px;color:#eceef2;transform:scaleX(0.9806);transform-origin:left center;">George Phillips</div>
<svg style="left:983px;top:463px" width="22" height="21" viewBox="983 463 22 21"><rect x="985.60" y="465.00" width="17.20" height="17.20" rx="0.00" fill="#232734" stroke="#4b5161" stroke-width="1.40"/></svg>
<div class="t k" style="left:1009.00px;top:463.76px;font-size:18.00px;color:#eceef2;">Jennifer Lennon</div>
<svg style="left:983px;top:490px" width="22" height="21" viewBox="983 490 22 21"><rect x="985.60" y="491.70" width="17.20" height="17.20" rx="0.00" fill="#232734" stroke="#4b5161" stroke-width="1.40"/></svg>
<div class="t k" style="left:1009.00px;top:490.46px;font-size:18.00px;color:#eceef2;transform:scaleX(0.9913);transform-origin:left center;">Michael Glover</div>
<svg style="left:983px;top:516px" width="22" height="22" viewBox="983 516 22 22"><rect x="985.60" y="518.40" width="17.20" height="17.20" rx="0.00" fill="#232734" stroke="#4b5161" stroke-width="1.40"/></svg>
<div class="t k" style="left:1009.00px;top:517.16px;font-size:18.00px;color:#eceef2;transform:scaleX(0.9962);transform-origin:left center;">Mike Cranston</div>
<svg style="left:983px;top:543px" width="22" height="21" viewBox="983 543 22 21"><rect x="985.60" y="545.10" width="17.20" height="17.20" rx="0.00" fill="#232734" stroke="#4b5161" stroke-width="1.40"/></svg>
<div class="t k" style="left:1009.00px;top:543.86px;font-size:18.00px;color:#eceef2;transform:scaleX(0.9900);transform-origin:left center;">Mike Horn</div>
<svg style="left:983px;top:570px" width="22" height="21" viewBox="983 570 22 21"><rect x="985.60" y="571.80" width="17.20" height="17.20" rx="0.00" fill="#232734" stroke="#4b5161" stroke-width="1.40"/></svg>
<div class="t k" style="left:1009.00px;top:570.56px;font-size:18.00px;color:#eceef2;transform:scaleX(0.9679);transform-origin:left center;">Sam Summers</div>
<svg style="left:983px;top:596px" width="22" height="22" viewBox="983 596 22 22"><rect x="985.60" y="598.50" width="17.20" height="17.20" rx="0.00" fill="#232734" stroke="#4b5161" stroke-width="1.40"/></svg>
<div class="t k" style="left:1009.00px;top:597.26px;font-size:18.00px;color:#eceef2;transform:scaleX(0.9880);transform-origin:left center;">Samantha Cummings</div>
<svg style="left:983px;top:623px" width="22" height="22" viewBox="983 623 22 22"><rect x="985.60" y="625.20" width="17.20" height="17.20" rx="0.00" fill="#232734" stroke="#4b5161" stroke-width="1.40"/></svg>
<div class="t k" style="left:1009.00px;top:623.96px;font-size:18.00px;color:#eceef2;">Tara Washington</div>
<div style="left:83.300px;top:746.600px;width:134.700px;height:37px;background:#535a6e"></div>
<div class="t k" style="left:104.50px;top:756.94px;font-size:18.50px;color:#fff;transform:scaleX(0.9747);transform-origin:left center;">Show tasks</div>
<div style="left:238.80px;top:757.200px;width:15px;height:15px;background:#6cd266"></div>
<div class="t" style="left:261.25px;top:757.76px;font-size:16.00px;color:#9b9fab;transform:scaleX(0.9571);transform-origin:left center;">Assigned</div>
<div style="left:344.40px;top:757.200px;width:15px;height:15px;background:#f05a4a"></div>
<div class="t" style="left:367.00px;top:757.76px;font-size:16.00px;color:#9b9fab;transform:scaleX(0.9659);transform-origin:left center;">Over-assigned</div>
<div style="left:487.90px;top:757.200px;width:15px;height:15px;background:#f7a83e"></div>
<div class="t" style="left:510.50px;top:757.76px;font-size:16.00px;color:#9b9fab;transform:scaleX(0.9501);transform-origin:left center;">Holiday</div>
<svg style="left:580px;top:755px" width="20" height="20" viewBox="580 755 20 20"><rect x="582.05" y="756.95" width="16.00" height="15.90" rx="0.00" fill="#101322" stroke="#3d4251" stroke-width="1.50"/></svg>
<div class="t" style="left:606.25px;top:757.76px;font-size:16.00px;color:#9b9fab;transform:scaleX(0.9550);transform-origin:left center;">Unassigned</div>
<svg style="left:706px;top:755px" width="20" height="20" viewBox="706 755 20 20"><rect x="707.75" y="756.95" width="16.00" height="15.90" rx="0.00" fill="#232836" stroke="#3d4251" stroke-width="1.50"/></svg>
<div class="t" style="left:732.00px;top:757.76px;font-size:16.00px;color:#9b9fab;transform:scaleX(0.9931);transform-origin:left center;">Non-working</div>
</body></html>
